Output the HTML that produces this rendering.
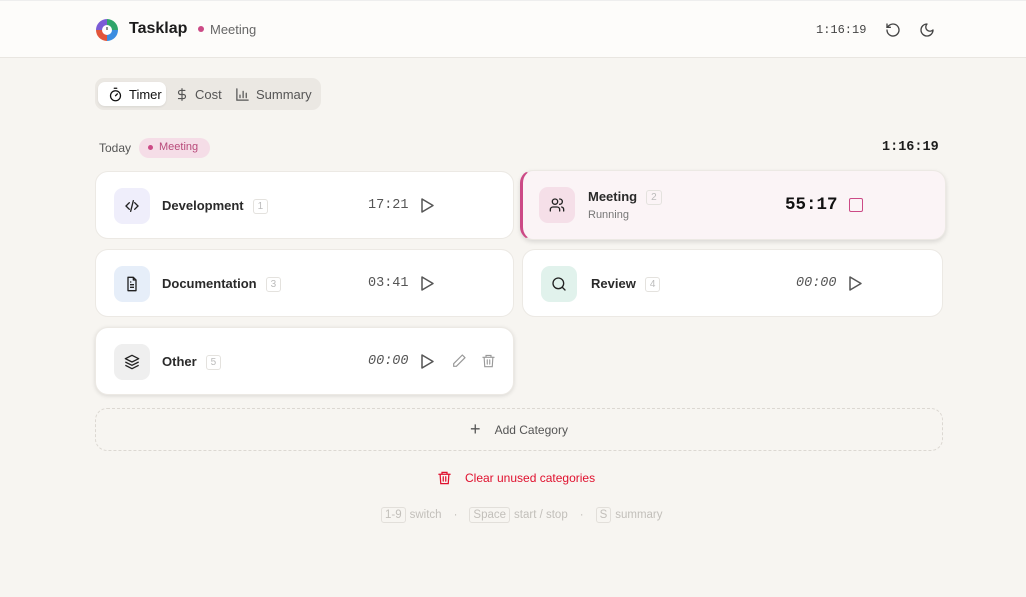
<!DOCTYPE html>
<html><head><meta charset="utf-8"><style>
*{box-sizing:border-box;margin:0;padding:0}
body{width:1026px;height:597px;background:#f7f5f1;font-family:"Liberation Sans",sans-serif;color:#1c1c1c;position:relative;overflow:hidden}
.hdr{position:absolute;left:0;top:0;width:1026px;height:58px;background:#fdfcfa;border-bottom:1px solid #e9e6e1;border-top:1px solid #eee}
.abs{position:absolute}
.mono{font-family:"Liberation Mono",monospace}
.tabs{left:95px;top:78px;width:226px;height:32px;background:#ebe8e3;border-radius:9px}
.tab{position:absolute;top:4px;height:24px;display:flex;align-items:center;gap:6px;font-size:13px;color:#555}
.card{position:absolute;background:#fff;border:1px solid #ece9e4;border-radius:13px;height:68px}
.ic{position:absolute;left:18px;top:16px;width:36px;height:36px;border-radius:9px;display:flex;align-items:center;justify-content:center}
.nm{position:absolute;left:66px;top:26px;font-size:13px;font-weight:bold;color:#2a2a2a}
.kb{display:inline-block;border:1px solid #e4e2de;border-radius:3px;font-size:10px;color:#bbb;font-weight:normal;padding:1px 4px;margin-left:9px;vertical-align:1px}
.tm{position:absolute;top:26px;font-size:13.5px;color:#555}
svg{display:block}
</style></head><body>
<div class="hdr">
  <svg class="abs" style="left:96px;top:18px" width="22" height="22" viewBox="0 0 22 22"><path d="M11 11L11 0A11 11 0 0 1 22 11Z" fill="#2fa56a"/><path d="M11 11L22 11A11 11 0 0 1 11 22Z" fill="#3b8de0"/><path d="M11 11L11 22A11 11 0 0 1 0 11Z" fill="#e2553a"/><path d="M11 11L0 11A11 11 0 0 1 11 0Z" fill="#7b5cd6"/><circle cx="11" cy="11" r="5" fill="#fff"/><path d="M11 8v3" stroke="#555" stroke-width="1.3"/></svg>
  <div class="abs" style="left:129px;top:19px;font-size:16px;font-weight:bold">Tasklap</div>
  <div class="abs" style="left:198px;top:25px;width:6px;height:6px;border-radius:3px;background:#cc4a86"></div>
  <div class="abs" style="left:210px;top:21px;font-size:13px;color:#666">Meeting</div>
  <div class="abs mono" style="left:816px;top:22px;font-size:12px;color:#444">1:16:19</div>
  <svg class="abs" style="left:885px;top:21px" width="16" height="16" viewBox="0 0 24 24" fill="none" stroke="#444" stroke-width="2" stroke-linecap="round"><path d="M3 12a9 9 0 1 0 3-6.7L3 8"/><path d="M3 3v5h5"/></svg>
  <svg class="abs" style="left:919px;top:21px" width="16" height="16" viewBox="0 0 24 24" fill="none" stroke="#444" stroke-width="2" stroke-linejoin="round"><path d="M12 3a6 6 0 0 0 9 9 9 9 0 1 1-9-9Z"/></svg>
</div>
<div class="abs tabs">
  <div class="tab" style="left:3px;width:68px;background:#fff;border-radius:7px;padding-left:10px;color:#111;box-shadow:0 1px 2px rgba(0,0,0,.08)"><svg width="15" height="15" viewBox="0 0 24 24" fill="none" stroke="#111" stroke-width="2" stroke-linecap="round"><circle cx="12" cy="14" r="8"/><path d="M10 2h4M12 14l3-3"/></svg>Timer</div>
  <div class="tab" style="left:80px"><svg width="14" height="15" viewBox="0 0 24 24" fill="none" stroke="#555" stroke-width="2" stroke-linecap="round"><path d="M12 2v20M17 5H9.5a3.5 3.5 0 0 0 0 7h5a3.5 3.5 0 0 1 0 7H6"/></svg>Cost</div>
  <div class="tab" style="left:140px"><svg width="15" height="15" viewBox="0 0 24 24" fill="none" stroke="#555" stroke-width="2" stroke-linecap="round"><path d="M3 3v18h18M8 17v-4M13 17V7M18 17v-7"/></svg>Summary</div>
</div>
<div class="abs" style="left:99px;top:141px;font-size:12px;color:#555">Today</div>
<div class="abs" style="left:139px;top:138px;width:71px;height:20px;background:#f5dde7;border-radius:10px;font-size:11px;color:#b84a7a;padding:3px 0 0 20px">Meeting<span style="position:absolute;left:9px;top:7px;width:5px;height:5px;border-radius:3px;background:#cc4a86"></span></div>
<div class="abs mono" style="left:882px;top:140px;font-size:13.5px;font-weight:bold">1:16:19</div>

<div class="card" style="left:95px;top:171px;width:419px">
  <div class="ic" style="background:#efeefb"><svg width="16" height="16" viewBox="0 0 24 24" fill="none" stroke="#222" stroke-width="2" stroke-linecap="round"><path d="M8 7l-5 5 5 5M16 7l5 5-5 5M14 4l-4 16"/></svg></div>
  <div class="nm">Development<span class="kb">1</span></div>
  <div class="tm mono" style="left:272px">17:21</div>
  <svg class="abs" style="left:324px;top:25px" width="15" height="17" viewBox="0 0 15 17" fill="none" stroke="#555" stroke-width="1.5" stroke-linejoin="round"><path d="M2 2l11 6.5L2 15Z"/></svg>
</div>
<div class="card" style="left:95px;top:249px;width:419px">
  <div class="ic" style="background:#e6eef9"><svg width="16" height="16" viewBox="0 0 24 24" fill="none" stroke="#222" stroke-width="2" stroke-linejoin="round"><path d="M14 2H6v20h12V6Z M14 2v4h4M9 13h6M9 17h6M9 9h2"/></svg></div>
  <div class="nm">Documentation<span class="kb">3</span></div>
  <div class="tm mono" style="left:272px">03:41</div>
  <svg class="abs" style="left:324px;top:25px" width="15" height="17" viewBox="0 0 15 17" fill="none" stroke="#555" stroke-width="1.5" stroke-linejoin="round"><path d="M2 2l11 6.5L2 15Z"/></svg>
</div>
<div class="card" style="left:95px;top:327px;width:419px;box-shadow:0 1px 4px rgba(0,0,0,.12)">
  <div class="ic" style="background:#efefef"><svg width="16" height="16" viewBox="0 0 24 24" fill="none" stroke="#222" stroke-width="2" stroke-linejoin="round"><path d="M12 2L2 7l10 5 10-5Z M2 12l10 5 10-5M2 17l10 5 10-5"/></svg></div>
  <div class="nm">Other<span class="kb">5</span></div>
  <div class="tm mono" style="left:272px;font-style:italic">00:00</div>
  <svg class="abs" style="left:324px;top:25px" width="15" height="17" viewBox="0 0 15 17" fill="none" stroke="#555" stroke-width="1.5" stroke-linejoin="round"><path d="M2 2l11 6.5L2 15Z"/></svg>
  <svg class="abs" style="left:355px;top:25px" width="16" height="16" viewBox="0 0 24 24" fill="none" stroke="#999" stroke-width="1.8" stroke-linejoin="round"><path d="M17 3l4 4L8 20H4v-4Z"/></svg>
  <svg class="abs" style="left:385px;top:25px" width="15" height="16" viewBox="0 0 24 24" fill="none" stroke="#999" stroke-width="1.8" stroke-linecap="round"><path d="M3 6h18M8 6V3h8v3M5 6l1 15h12l1-15M10 10v7M14 10v7"/></svg>
</div>

<div class="card" style="left:520px;top:170px;width:426px;height:70px;background:#fbf4f6;border-left:3px solid #cc4a86;box-shadow:0 2px 5px rgba(0,0,0,.12)">
  <div class="ic" style="left:16px;background:#f5dfe8"><svg width="16" height="16" viewBox="0 0 24 24" fill="none" stroke="#222" stroke-width="2" stroke-linecap="round"><circle cx="9" cy="7" r="4"/><path d="M2 21v-2a4 4 0 0 1 4-4h6a4 4 0 0 1 4 4v2M16 3a4 4 0 0 1 0 8M22 21v-2a4 4 0 0 0-3-4"/></svg></div>
  <div class="nm" style="left:65px;top:18px">Meeting<span class="kb">2</span></div>
  <div class="abs" style="left:65px;top:38px;font-size:11px;color:#777">Running</div>
  <div class="abs mono" style="left:262px;top:24px;font-size:17.5px;font-weight:bold;color:#111">55:17</div>
  <div class="abs" style="left:326px;top:27px;width:14px;height:14px;border:1.6px solid #cc4a86;border-radius:2px"></div>
</div>
<div class="card" style="left:522px;top:249px;width:421px">
  <div class="ic" style="background:#e1f2ec"><svg width="16" height="16" viewBox="0 0 24 24" fill="none" stroke="#222" stroke-width="2" stroke-linecap="round"><circle cx="11" cy="11" r="8"/><path d="M21 21l-4.3-4.3"/></svg></div>
  <div class="nm" style="left:68px">Review<span class="kb">4</span></div>
  <div class="tm mono" style="left:273px;font-style:italic">00:00</div>
  <svg class="abs" style="left:325px;top:25px" width="15" height="17" viewBox="0 0 15 17" fill="none" stroke="#555" stroke-width="1.5" stroke-linejoin="round"><path d="M2 2l11 6.5L2 15Z"/></svg>
</div>

<div class="abs" style="left:95px;top:408px;width:848px;height:43px;border:1px dashed #dcd8d2;border-radius:12px;display:flex;align-items:center;justify-content:center;gap:14px;font-size:12px;color:#555"><span style="font-size:18px;font-weight:300;color:#555">+</span>Add Category</div>

<svg class="abs" style="left:437px;top:470px" width="15" height="16" viewBox="0 0 24 24" fill="none" stroke="#e0102e" stroke-width="2" stroke-linecap="round"><path d="M3 6h18M8 6V3h8v3M5 6l1 15h12l1-15M10 10v7M14 10v7"/></svg>
<div class="abs" style="left:465px;top:471px;font-size:12px;color:#e0102e">Clear unused categories</div>

<div class="abs" style="left:381px;top:507px;font-size:11.5px;color:#c2bfba;display:flex;align-items:center;gap:4px;white-space:nowrap">
<span style="border:1px solid #e2dfda;border-radius:3px;padding:1px 3px">1-9</span>switch<span style="margin:0 8px">·</span><span style="border:1px solid #e2dfda;border-radius:3px;padding:1px 3px">Space</span>start / stop<span style="margin:0 8px">·</span><span style="border:1px solid #e2dfda;border-radius:3px;padding:1px 3px">S</span>summary</div>
</body></html>
